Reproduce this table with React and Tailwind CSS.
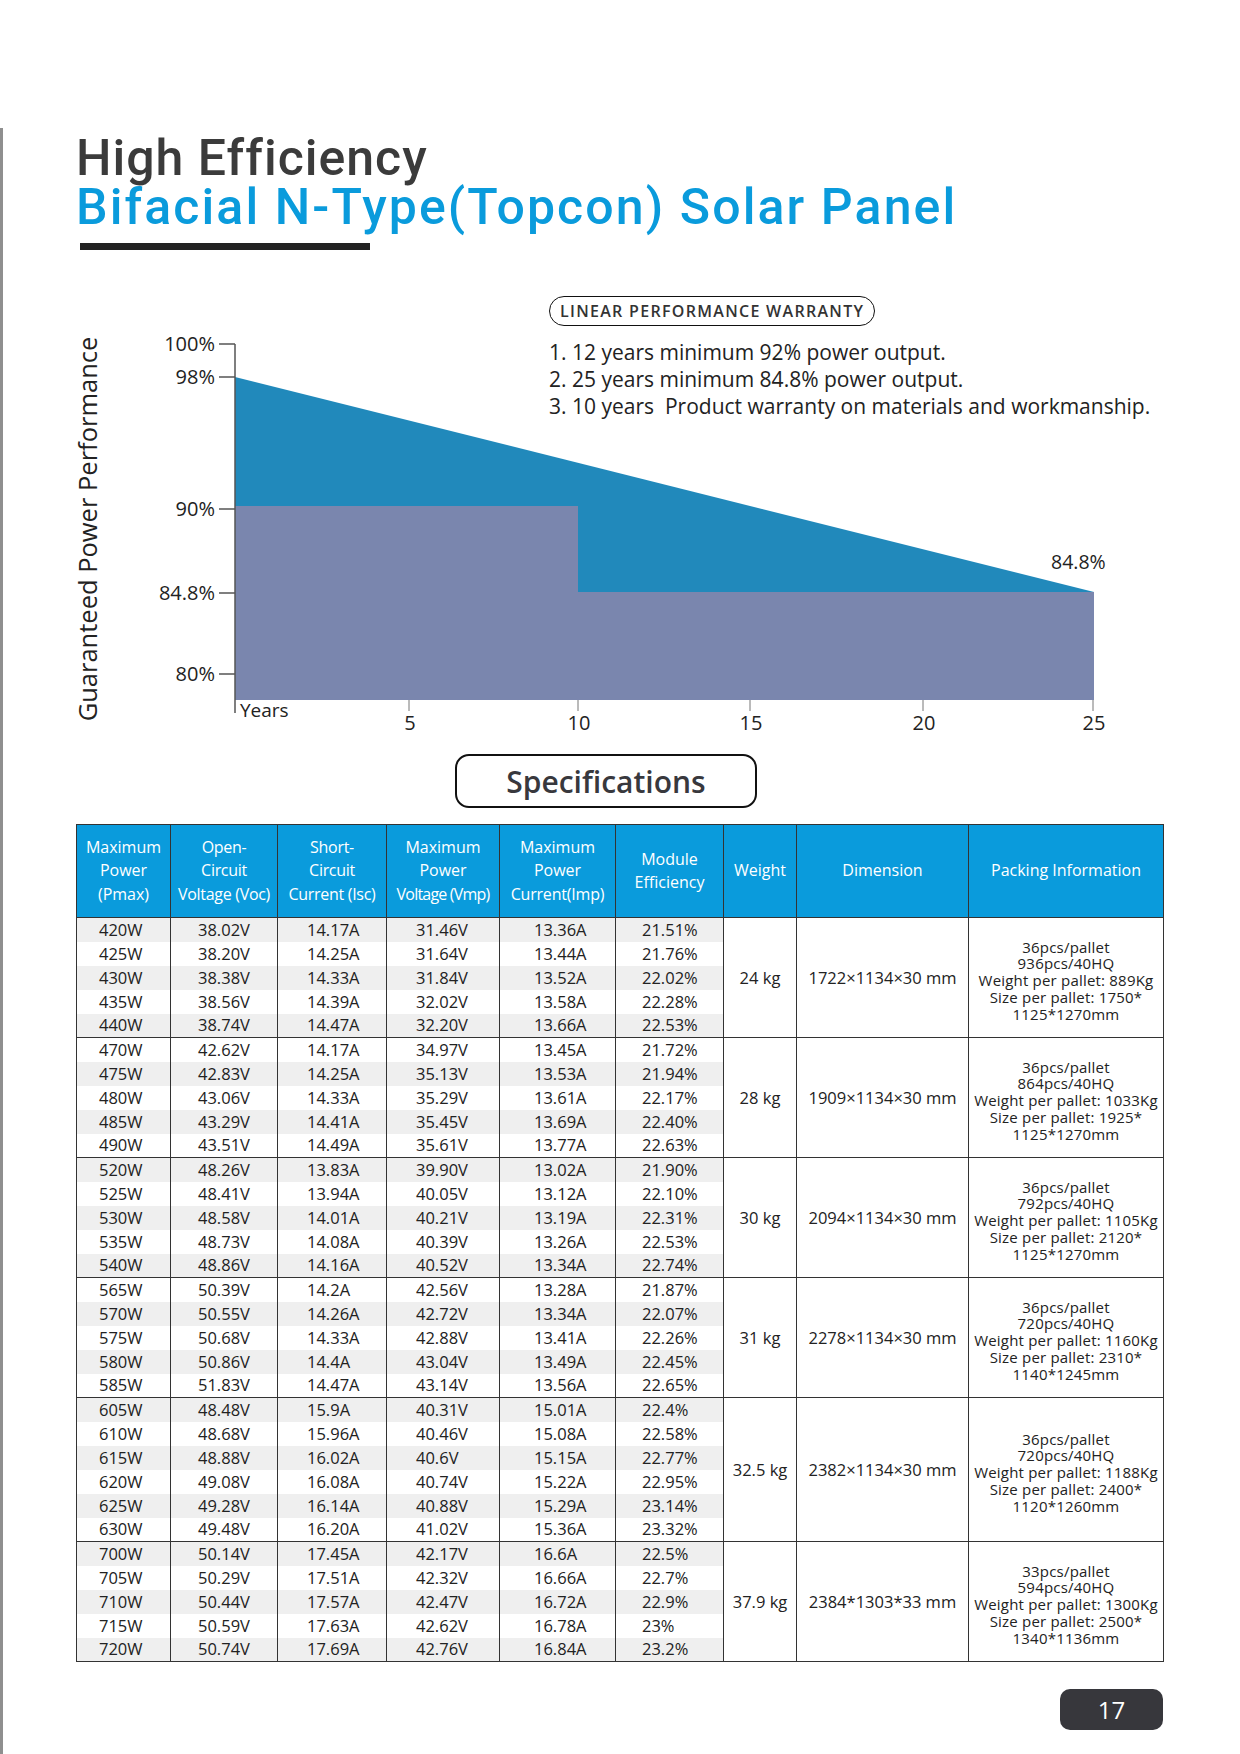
const groups = [
  {
    weight: "24 kg",
    dim: "1722×1134×30 mm",
    pack: ["36pcs/pallet", "936pcs/40HQ", "Weight per pallet: 889Kg", "Size per pallet: 1750*", "1125*1270mm"],
    rows: [
      ["420W", "38.02V", "14.17A", "31.46V", "13.36A", "21.51%"],
      ["425W", "38.20V", "14.25A", "31.64V", "13.44A", "21.76%"],
      ["430W", "38.38V", "14.33A", "31.84V", "13.52A", "22.02%"],
      ["435W", "38.56V", "14.39A", "32.02V", "13.58A", "22.28%"],
      ["440W", "38.74V", "14.47A", "32.20V", "13.66A", "22.53%"],
    ],
  },
  {
    weight: "28 kg",
    dim: "1909×1134×30 mm",
    pack: ["36pcs/pallet", "864pcs/40HQ", "Weight per pallet: 1033Kg", "Size per pallet: 1925*", "1125*1270mm"],
    rows: [
      ["470W", "42.62V", "14.17A", "34.97V", "13.45A", "21.72%"],
      ["475W", "42.83V", "14.25A", "35.13V", "13.53A", "21.94%"],
      ["480W", "43.06V", "14.33A", "35.29V", "13.61A", "22.17%"],
      ["485W", "43.29V", "14.41A", "35.45V", "13.69A", "22.40%"],
      ["490W", "43.51V", "14.49A", "35.61V", "13.77A", "22.63%"],
    ],
  },
  {
    weight: "30 kg",
    dim: "2094×1134×30 mm",
    pack: ["36pcs/pallet", "792pcs/40HQ", "Weight per pallet: 1105Kg", "Size per pallet: 2120*", "1125*1270mm"],
    rows: [
      ["520W", "48.26V", "13.83A", "39.90V", "13.02A", "21.90%"],
      ["525W", "48.41V", "13.94A", "40.05V", "13.12A", "22.10%"],
      ["530W", "48.58V", "14.01A", "40.21V", "13.19A", "22.31%"],
      ["535W", "48.73V", "14.08A", "40.39V", "13.26A", "22.53%"],
      ["540W", "48.86V", "14.16A", "40.52V", "13.34A", "22.74%"],
    ],
  },
  {
    weight: "31 kg",
    dim: "2278×1134×30 mm",
    pack: ["36pcs/pallet", "720pcs/40HQ", "Weight per pallet: 1160Kg", "Size per pallet: 2310*", "1140*1245mm"],
    rows: [
      ["565W", "50.39V", "14.2A", "42.56V", "13.28A", "21.87%"],
      ["570W", "50.55V", "14.26A", "42.72V", "13.34A", "22.07%"],
      ["575W", "50.68V", "14.33A", "42.88V", "13.41A", "22.26%"],
      ["580W", "50.86V", "14.4A", "43.04V", "13.49A", "22.45%"],
      ["585W", "51.83V", "14.47A", "43.14V", "13.56A", "22.65%"],
    ],
  },
  {
    weight: "32.5 kg",
    dim: "2382×1134×30 mm",
    pack: ["36pcs/pallet", "720pcs/40HQ", "Weight per pallet: 1188Kg", "Size per pallet: 2400*", "1120*1260mm"],
    rows: [
      ["605W", "48.48V", "15.9A", "40.31V", "15.01A", "22.4%"],
      ["610W", "48.68V", "15.96A", "40.46V", "15.08A", "22.58%"],
      ["615W", "48.88V", "16.02A", "40.6V", "15.15A", "22.77%"],
      ["620W", "49.08V", "16.08A", "40.74V", "15.22A", "22.95%"],
      ["625W", "49.28V", "16.14A", "40.88V", "15.29A", "23.14%"],
      ["630W", "49.48V", "16.20A", "41.02V", "15.36A", "23.32%"],
    ],
  },
  {
    weight: "37.9 kg",
    dim: "2384*1303*33 mm",
    pack: ["33pcs/pallet", "594pcs/40HQ", "Weight per pallet: 1300Kg", "Size per pallet: 2500*", "1340*1136mm"],
    rows: [
      ["700W", "50.14V", "17.45A", "42.17V", "16.6A", "22.5%"],
      ["705W", "50.29V", "17.51A", "42.32V", "16.66A", "22.7%"],
      ["710W", "50.44V", "17.57A", "42.47V", "16.72A", "22.9%"],
      ["715W", "50.59V", "17.63A", "42.62V", "16.78A", "23%"],
      ["720W", "50.74V", "17.69A", "42.76V", "16.84A", "23.2%"],
    ],
  },
];

const padClasses = ["pl-[22px]", "pl-[27px]", "pl-[29px]", "pl-[29px]", "pl-[34px]", "pl-[26px]"];

function Chart() {
  const ff = "Open Sans, sans-serif";
  const yTicks = [
    ["100%", 54],
    ["98%", 87],
    ["90%", 219],
    ["84.8%", 303],
    ["80%", 384],
  ];
  const xTicks = [
    ["5", 333],
    ["10", 502],
    ["15", 674],
    ["20", 847],
    ["25", 1017],
  ];
  return (
    <svg width="1088" height="450" viewBox="0 0 1088 450" className="block">
      <polygon points="159,87 1018,302 1018,410 159,410" fill="#2189bb" />
      <polygon points="159,216 502,216 502,302 1018,302 1018,410 159,410" fill="#7a86ae" />
      <line x1="159" y1="54" x2="159" y2="423" stroke="#555" strokeWidth="1.5" />
      {yTicks.map(([t, y]) => (
        <g key={t}>
          <line x1="143" y1={y} x2="159" y2={y} stroke="#555" strokeWidth="1.5" />
          <text x="139" y={y + 7} textAnchor="end" fontFamily={ff} fontSize="20" fill="#222">
            {t}
          </text>
        </g>
      ))}
      {xTicks.map(([t, x]) => (
        <g key={t}>
          <line x1={x} y1="410" x2={x} y2="421" stroke="#777" strokeWidth="1" />
          <text x={x + 1} y="440" textAnchor="middle" fontFamily={ff} fontSize="20" fill="#222">
            {t}
          </text>
        </g>
      ))}
      <text x="164" y="427" fontFamily={ff} fontSize="19" fill="#222">
        Years
      </text>
      <text x="975" y="279" fontFamily={ff} fontSize="19.5" fill="#222">
        84.8%
      </text>
      <text
        transform="translate(21,239) rotate(-90)"
        textAnchor="middle"
        fontFamily={ff}
        fontSize="25.5"
        fill="#222"
      >
        Guaranteed Power Performance
      </text>
    </svg>
  );
}

function Table() {
  let idx = 0;
  const head = "bg-[#0a9bdc] text-white border border-[#333] text-center align-middle font-normal p-0";
  return (
    <table className="table-fixed border-collapse w-[1087px] font-['Open_Sans',sans-serif] text-[#222]">
      <colgroup>
        <col className="w-[94px]" />
        <col className="w-[107px]" />
        <col className="w-[109px]" />
        <col className="w-[113px]" />
        <col className="w-[116px]" />
        <col className="w-[108px]" />
        <col className="w-[73px]" />
        <col className="w-[172px]" />
        <col className="w-[195px]" />
      </colgroup>
      <thead>
        <tr className="h-[93px] text-[16px] leading-[23.5px]">
          <th className={head}>Maximum<br />Power<br />(Pmax)</th>
          <th className={head}><span className="tracking-[-0.3px]">Open-<br />Circuit<br />Voltage (Voc)</span></th>
          <th className={head}><span className="tracking-[-0.3px]">Short-<br />Circuit<br />Current (Isc)</span></th>
          <th className={head}>Maximum<br />Power<br /><span className="tracking-[-0.8px]">Voltage (Vmp)</span></th>
          <th className={head}>Maximum<br />Power<br /><span className="tracking-[-0.2px]">Current(Imp)</span></th>
          <th className={head}>Module<br />Efficiency</th>
          <th className={head}>Weight</th>
          <th className={head}>Dimension</th>
          <th className={head}>Packing Information</th>
        </tr>
      </thead>
      <tbody>
        {groups.map((g, gi) =>
          g.rows.map((r, ri) => {
            const shade = idx % 2 === 0 ? "bg-[#efefef]" : "bg-white";
            idx++;
            const top = ri === 0 ? "border-t border-t-[#333]" : "";
            const bottom = ri === g.rows.length - 1 ? "border-b border-b-[#333]" : "";
            return (
              <tr key={gi + "-" + ri} className="h-[24px] text-[16.5px] leading-[22px]">
                {r.map((c, ci) => (
                  <td
                    key={ci}
                    className={`${shade} ${top} ${bottom} border-x border-x-[#333] p-0 ${padClasses[ci]} whitespace-nowrap`}
                  >
                    {c}
                  </td>
                ))}
                {ri === 0 && (
                  <>
                    <td rowSpan={g.rows.length} className="border border-[#333] text-center align-middle p-0 bg-white">
                      {g.weight}
                    </td>
                    <td rowSpan={g.rows.length} className="border border-[#333] text-center align-middle p-0 bg-white whitespace-nowrap">
                      {g.dim}
                    </td>
                    <td rowSpan={g.rows.length} className="border border-[#333] text-center align-middle p-0 pt-[6px] bg-white text-[15px] leading-[16.8px] tracking-[0.2px] whitespace-nowrap">
                      {g.pack.map((l) => (
                        <div key={l}>{l}</div>
                      ))}
                    </td>
                  </>
                )}
              </tr>
            );
          })
        )}
      </tbody>
    </table>
  );
}

export default function App() {
  return (
    <div className="w-[1240px] h-[1754px] bg-white pt-[128px] overflow-hidden">
      <div className="h-[1626px] border-l-[3px] border-[#8f8f8f] pl-[73px]">
        <div className="w-[1088px]">
          <div className="pt-[6px] font-['Roboto',sans-serif] text-[50px] leading-[49px] font-medium">
            <div className="text-[#3b3b3b] tracking-[1px]">High Efficiency</div>
            <div className="text-[#0a9bdc] tracking-[2.1px]">Bifacial N-Type(Topcon) Solar Panel</div>
          </div>
          <div className="mt-[11px] ml-[4px] w-[290px] h-[7px] bg-[#222]" />
          <div className="relative mt-[40px] h-[450px]">
            <Chart />
            <div className="absolute left-[473px] top-[6px] font-['Open_Sans',sans-serif] text-[#222]">
              <div className="inline-flex items-center h-[30px] px-[10px] border-[1.5px] border-[#111] rounded-full text-[16px] font-semibold text-[#333] tracking-[1.3px]">
                LINEAR PERFORMANCE WARRANTY
              </div>
              <div className="mt-[13px] text-[21px] leading-[27px] whitespace-pre">
                <div>1. 12 years minimum 92% power output.</div>
                <div>2. 25 years minimum 84.8% power output.</div>
                <div>3. 10 years  Product warranty on materials and workmanship.</div>
              </div>
            </div>
          </div>
          <div className="mt-[14px] ml-[379px] w-[302px] h-[54px] border-2 border-[#111] rounded-[14px] flex items-center justify-center font-['Open_Sans',sans-serif] text-[30px] font-semibold text-[#38383d]">
            Specifications
          </div>
          <div className="mt-[16px]">
            <Table />
          </div>
          <div className="mt-[27px] flex justify-end pr-[1px]">
            <div className="w-[103px] h-[41px] rounded-[10px] bg-[#37373c] flex items-center justify-center text-white text-[24px] font-medium font-['Open_Sans',sans-serif]">
              17
            </div>
          </div>
        </div>
      </div>
    </div>
  );
}
